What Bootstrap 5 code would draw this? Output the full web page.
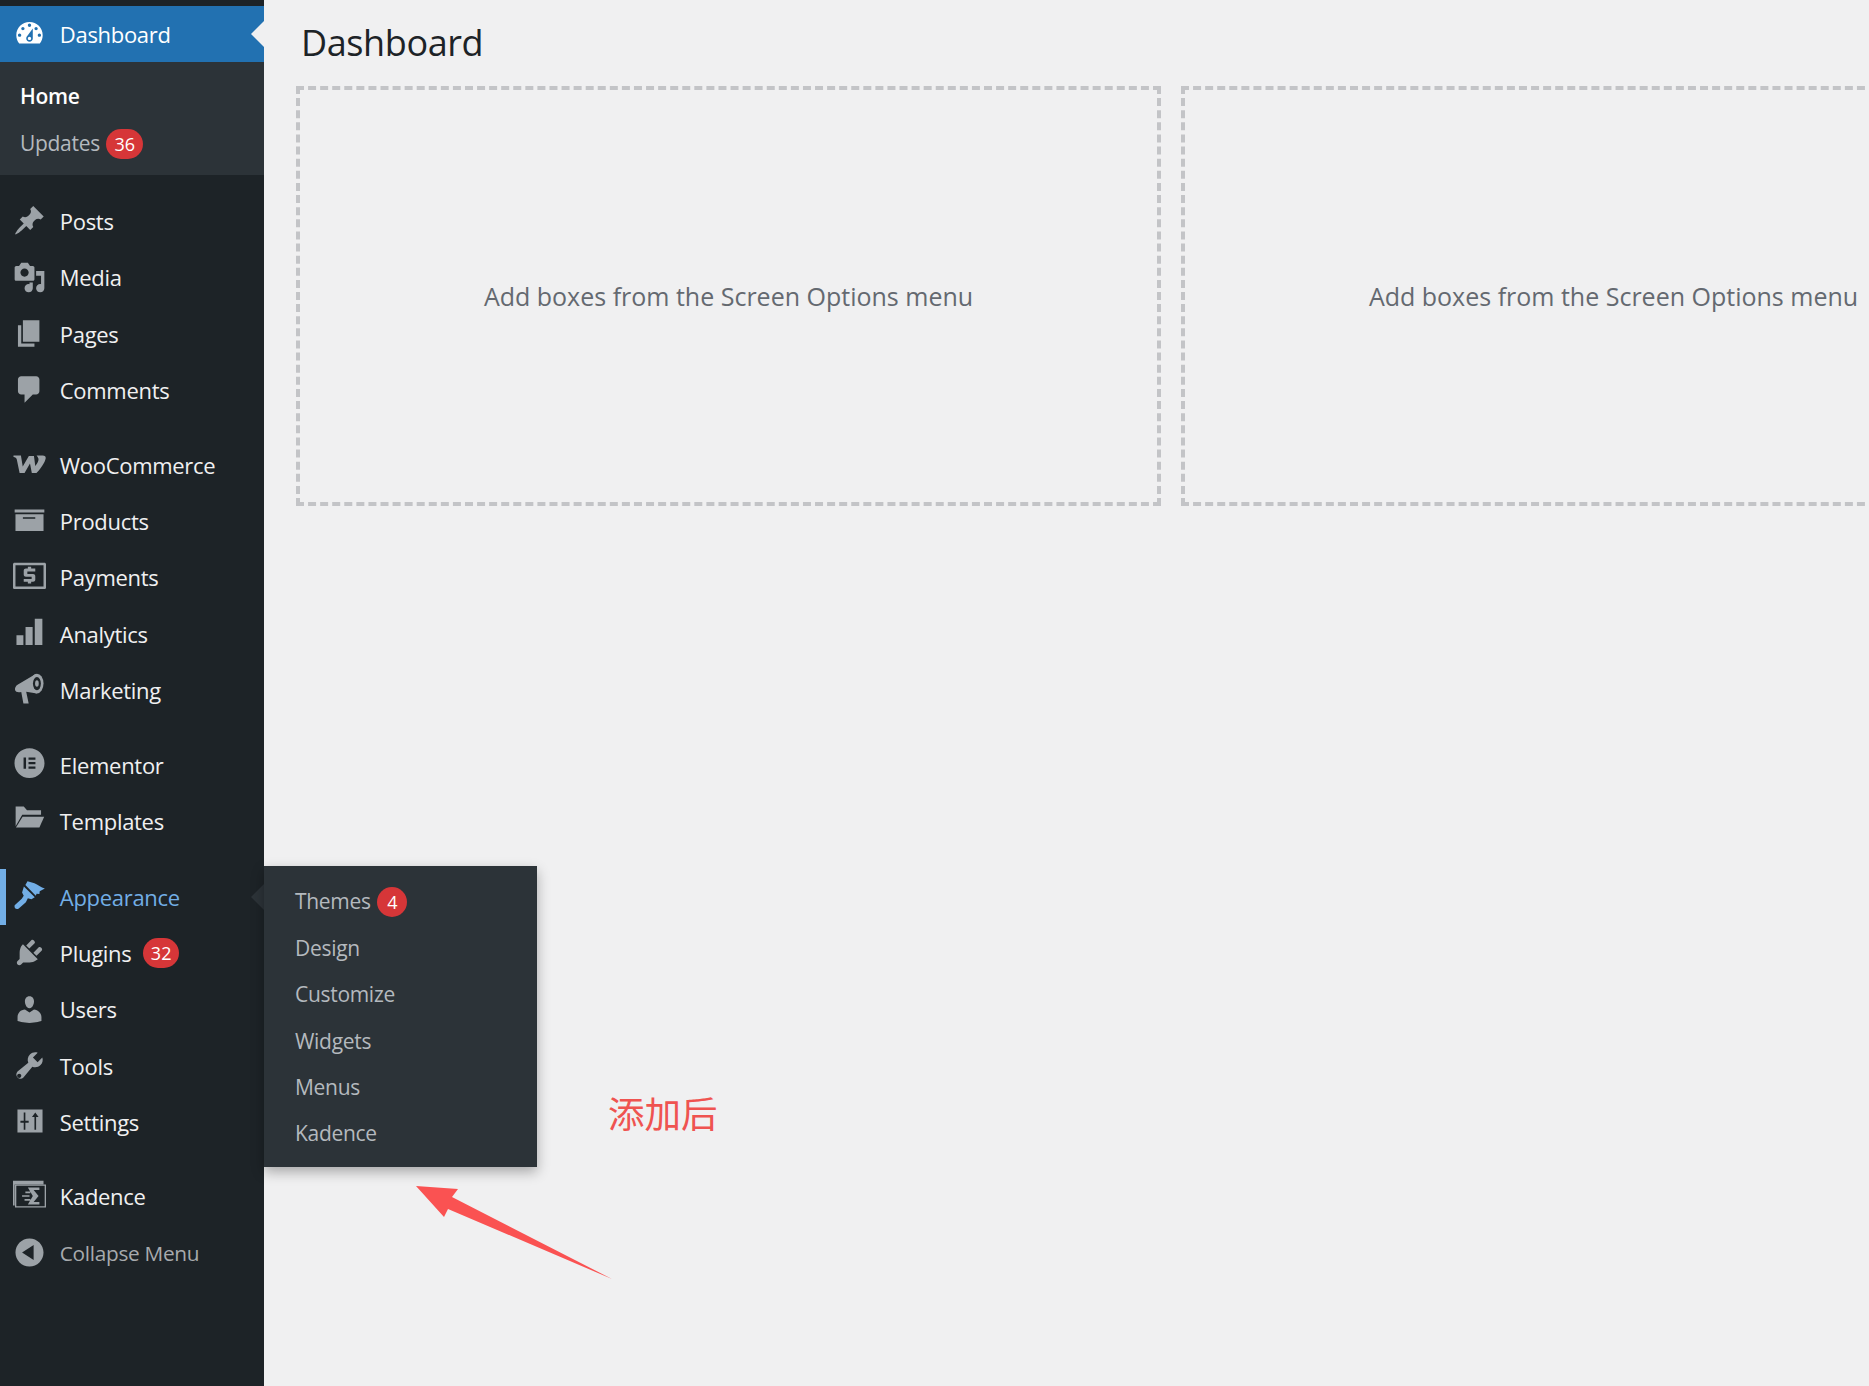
<!DOCTYPE html>
<html lang="en">
<head>
    <meta charset="UTF-8">
    <title>Dashboard</title>
    <link href="https://cdn.jsdelivr.net/npm/bootstrap@5.3.3/dist/css/bootstrap.min.css" rel="stylesheet">
    <style>
        html, body { height: 100%; }
        body { background: #f0f0f1; font-family: "Open Sans", "Liberation Sans", sans-serif; overflow: hidden; }
        .wp-side { width: 264px; background: #1d2327; padding-top: 6px; flex-shrink: 0; }
        .wp-item { height: 56.33px; color: #f0f0f1; font-size: 22px; text-decoration: none; letter-spacing: -.3px; }
        .wp-item svg { width: 33px; height: 33px; fill: #9ca2a7; margin: -1px 14px 0 12.8px; flex-shrink: 0; }
        .wp-item.is-current { background: #2271b1; color: #fff; height: 56px; }
        .wp-item.is-current svg { fill: #fff; }
        .wp-item.is-hover { color: #72aee6; box-shadow: inset 6px 0 0 #72aee6; }
        .wp-item.is-hover svg { fill: #72aee6; }
        .wp-item.is-muted { color: #a7aaad; font-size: 20.8px; }
        .wp-sep { height: 18.3px; }
        .wp-sep.is-wide { height: 19.4px; }
        .wp-sub { background: #2c3338; padding: 12px 0 9px; height: 113px; }
        .wp-sub a, .wp-fly a { display: flex; align-items: center; height: 46.4px; font-size: 21px; color: #b4b9be; text-decoration: none; letter-spacing: -.3px; }
        .wp-sub a { padding-left: 20px; }
        .wp-sub a.is-on { color: #fff; font-weight: 600; }
        .wp-fly { position: absolute; left: 264px; top: -3px; width: 273px; height: 301px; padding: 13px 0; background: #2c3338; box-shadow: 0 5px 12px rgba(0,0,0,.3); z-index: 5; }
        .wp-fly a { padding-left: 31px; }
        .wp-count { display: inline-block; min-width: 30px; height: 30px; line-height: 30px; padding: 0 8px; margin-left: 11.4px; border-radius: 15px; background: #d63638; color: #fff; font-size: 18px; text-align: center; letter-spacing: 0; }
        .wp-sub .wp-count, .wp-fly .wp-count { margin-left: 6.6px; }
        .wp-notch { position: absolute; right: 0; width: 0; height: 0; border: 13px solid transparent; border-left: 0; border-right-color: #f0f0f1; top: 15px; }
        .wp-notch.is-dark { border-right-color: #2c3338; }
        .wp-main { padding-left: 32px; }
        .wp-title { font-size: 36px; font-weight: 400; color: #1d2327; height: 86px; padding: 18px 0 0 5px; margin: 0; line-height: 50px; letter-spacing: -.4px; }
        .wp-drops { gap: 20px; }
        .wp-drop { width: 865px; height: 420px; flex-shrink: 0; padding-top: 2px; border: 4px dashed #c3c4c7; color: #646970; font-size: 25px; }
        .wp-note { position: absolute; left: 608px; top: 1088px; font-size: 36.5px; line-height: 50px; color: #ef5350; font-family: "Noto Sans CJK SC", sans-serif; }
        .wp-arrow { position: absolute; left: 408px; top: 1180px; }
    </style>
</head>
<body>
<div class="d-flex h-100">
    <nav class="wp-side">
        <a href="#" class="wp-item is-current d-flex align-items-center position-relative">
            <svg viewBox="0 0 20 20"><path d="M3.76 16h12.48c1.1-1.37 1.76-3.11 1.76-5 0-4.42-3.58-8-8-8s-8 3.58-8 8c0 1.89.66 3.63 1.76 5zM10 4c.55 0 1 .45 1 1s-.45 1-1 1-1-.45-1-1 .45-1 1-1zM6 6c.55 0 1 .45 1 1s-.45 1-1 1-1-.45-1-1 .45-1 1-1zm8 0c.55 0 1 .45 1 1s-.45 1-1 1-1-.45-1-1 .45-1 1-1zm-5.37 5.55L12 7v6c0 1.1-.9 2-2 2s-2-.9-2-2c0-.57.24-1.08.63-1.45zM4 10c.55 0 1 .45 1 1s-.45 1-1 1-1-.45-1-1 .45-1 1-1zm12 0c.55 0 1 .45 1 1s-.45 1-1 1-1-.45-1-1 .45-1 1-1zm-5 3c0-.55-.45-1-1-1s-1 .45-1 1 .45 1 1 1 1-.45 1-1z"/></svg>
            Dashboard
            <span class="wp-notch"></span>
        </a>
        <div class="wp-sub">
            <a href="#" class="is-on">Home</a>
            <a href="#">Updates <span class="wp-count">36</span></a>
        </div>
        <div class="wp-sep"></div>
        <a href="#" class="wp-item d-flex align-items-center"><svg viewBox="0 0 20 20"><path d="M10.44 3.02l1.82-1.82 6.36 6.35-1.83 1.82c-1.05-.68-2.48-.57-3.41.36l-.75.75c-.92.93-1.04 2.35-.35 3.41l-1.83 1.82-2.41-2.41-2.8 2.79c-.42.42-3.38 2.71-3.8 2.29s1.86-3.39 2.28-3.81l2.79-2.79L4.1 9.36l1.83-1.82c1.05.69 2.48.57 3.4-.36l.75-.75c.93-.92 1.05-2.35.36-3.41z"/></svg>Posts</a>
        <a href="#" class="wp-item d-flex align-items-center"><svg viewBox="0 0 20 20"><path d="M13 11V4c0-.55-.45-1-1-1h-1.67L9 1H5L3.67 3H2c-.55 0-1 .45-1 1v7c0 .55.45 1 1 1h10c.55 0 1-.45 1-1zM7 4.5c1.38 0 2.5 1.12 2.5 2.5S8.38 9.5 7 9.5 4.5 8.38 4.5 7 5.62 4.5 7 4.5zM14 6h5v10.5c0 1.38-1.12 2.5-2.5 2.5S14 17.88 14 16.5s1.12-2.5 2.5-2.5c.17 0 .34.02.5.05V9h-3V6zm-4 8.05V13h2v3.5c0 1.38-1.12 2.5-2.5 2.5S7 17.88 7 16.5 8.12 14 9.5 14c.17 0 .34.02.5.05z"/></svg>Media</a>
        <a href="#" class="wp-item d-flex align-items-center"><svg viewBox="0 0 20 20"><path d="M6 15V2h10v13H6zm-1 1h8v2H3V5h2v11z"/></svg>Pages</a>
        <a href="#" class="wp-item d-flex align-items-center"><svg viewBox="0 0 20 20"><path d="M5 2h9c1.1 0 2 .9 2 2v7c0 1.1-.9 2-2 2h-2l-5 5v-5H5c-1.1 0-2-.9-2-2V4c0-1.1.9-2 2-2z"/></svg>Comments</a>
        <div class="wp-sep"></div>
        <a href="#" class="wp-item d-flex align-items-center"><svg viewBox="0 0 20 20"><path d="M.3 4.600H4.800L5.900 11.200 9.600 4.800H12.700L13.500 10.900C14.800 9.300 15.800 7.600 15.400 6.400 15.200 5.700 14.800 5.200 14.300 4.600H18C19.200 4.600 20 5.200 19.800 6.300 19.400 8.700 16.600 12.700 14.200 15.200H11.400L10.300 9.400 7 15.200H4L2.300 7C2.100 6.100 1.400 5.700.3 5.500z"/></svg>WooCommerce</a>
        <a href="#" class="wp-item d-flex align-items-center"><svg viewBox="0 0 20 20"><path fill-rule="evenodd" d="M1 3.300h18v1.800H1zM1.500 6.200h17v10.200h-17zM6 8v.9h7.500V8z"/></svg>Products</a>
        <a href="#" class="wp-item d-flex align-items-center"><svg viewBox="0 0 20 20"><path fill-rule="evenodd" d="M1 1h18c.600 0 1 .400 1 1v14c0 .600-.400 1-1 1H1c-.600 0-1-.400-1-1V2c0-.600.400-1 1-1zm.500 1.500v13h17v-13z"/><path d="M9 3.500h2v1.100h2.500v1.700H8.700v1.600h3.500c.700 0 1.300.500 1.300 1.200v2.300c0 .700-.600 1.200-1.300 1.200H11v1h-2v-1H6.500v-1.700h4.800V9.500H7.800c-.700 0-1.300-.500-1.300-1.200V5.800c0-.700.600-1.200 1.300-1.200H9z"/></svg>Payments</a>
        <a href="#" class="wp-item d-flex align-items-center"><svg viewBox="0 0 20 20"><path d="M2.100 11h4.200v6H2.100zM7.600 6h4.300v11H7.600zM13.200 1h4.600v16h-4.600z"/></svg>Analytics</a>
        <a href="#" class="wp-item d-flex align-items-center"><svg viewBox="0 0 20 20"><path d="M14 .500L3 7C1.300 8 1 9.500 1.300 10.500 1.600 11.500 3 12 5 11.500L6.300 18.500H9.500L8 11.300 14.500 12.400z"/><ellipse cx="14.500" cy="6.400" rx="4" ry="6"/><ellipse cx="14.500" cy="6.400" rx="2.400" ry="4" fill="#1d2327"/><ellipse cx="14.500" cy="6.400" rx="1.100" ry="2"/></svg>Marketing</a>
        <div class="wp-sep"></div>
        <a href="#" class="wp-item d-flex align-items-center"><svg viewBox="0 0 20 20"><path fill-rule="evenodd" d="M10 .2c5 0 9.100 4 9.100 9s-4.100 9-9.100 9-9.100-4-9.100-9 4.100-9 9.100-9zM6.400 5.800v6.700h1.500V5.800zm3 0v1.300h4.200V5.800zm0 2.700v1.300h4.200V8.500zm0 2.700v1.300h4.200v-1.300z"/></svg>Elementor</a>
        <a href="#" class="wp-item d-flex align-items-center"><svg viewBox="0 0 20 20"><path d="M1.600 13.500V1.500H6.500L8.500 3.800H17V6.500H5.600z"/><path d="M1.800 14.300L5.800 7.700H18.900L16 14.300z"/></svg>Templates</a>
        <div class="wp-sep is-wide"></div>
        <div class="position-relative">
            <a href="#" class="wp-item is-hover d-flex align-items-center position-relative"><svg viewBox="0 0 20 20"><path d="M8.800.7L13 2C15 3 17 4.500 19.300 5.100L16.200 6.800 16 8.500 14.300 8.300 13.800 9.500 7.500 3z"/><path d="M6.600 3.900L13.200 10.400 11.200 11.600 9 11 7.800 13.500 3.500 17.300C2 18.300.5 17 1 15.300L5.300 11.300 6.500 9.500 5.500 7.500z"/></svg>Appearance<span class="wp-notch is-dark"></span></a>
            <div class="wp-fly">
                <a href="#">Themes <span class="wp-count">4</span></a>
                <a href="#">Design</a>
                <a href="#">Customize</a>
                <a href="#">Widgets</a>
                <a href="#">Menus</a>
                <a href="#">Kadence</a>
            </div>
        </div>
        <a href="#" class="wp-item d-flex align-items-center"><svg viewBox="0 0 20 20"><path d="M13.11 4.36L9.87 7.6 8 5.73l3.24-3.24c.35-.34 1.05-.2 1.56.32.52.51.66 1.21.31 1.55zm-8 1.77l.91-1.12 9.01 9.01-1.19.84c-.71.71-2.63 1.16-3.82 1.16H6.14L4.9 17.26c-.59.59-1.54.59-2.12 0-.59-.58-.59-1.53 0-2.12l1.24-1.24v-3.88c0-1.13.52-3.13 1.09-3.89zm7.26 3.97l3.24-3.24c.34-.35 1.04-.21 1.55.31.52.51.66 1.21.31 1.55l-3.24 3.25z"/></svg>Plugins <span class="wp-count">32</span></a>
        <a href="#" class="wp-item d-flex align-items-center"><svg viewBox="0 0 20 20"><path d="M10 9.25c-2.27 0-2.73-3.44-2.73-3.44C7 4.02 7.82 2 9.97 2c2.16 0 2.98 2.02 2.71 3.81 0 0-.41 3.44-2.68 3.44zm0 2.57L12.72 10c2.39 0 4.52 2.33 4.52 4.53v2.49s-3.65 1.13-7.24 1.13c-3.65 0-7.24-1.13-7.24-1.13v-2.49c0-2.25 1.94-4.48 4.47-4.48z"/></svg>Users</a>
        <a href="#" class="wp-item d-flex align-items-center"><svg viewBox="0 0 20 20"><path d="M16.68 9.77c-1.34 1.34-3.3 1.67-4.95.99l-5.41 6.52c-.99.99-2.59.99-3.57 0-.99-.98-.99-2.58 0-3.57l6.52-5.42c-.68-1.65-.35-3.61.99-4.95 1.28-1.28 3.12-1.62 4.72-1.06l-2.89 2.89 2.82 2.82 2.86-2.87c.53 1.58.18 3.39-1.09 4.65zM4.66 15.37c-.49-.49-1.29-.49-1.78 0s-.49 1.29 0 1.78 1.29.49 1.78 0 .49-1.29 0-1.78z"/></svg>Tools</a>
        <a href="#" class="wp-item d-flex align-items-center"><svg viewBox="0 0 20 20"><path fill-rule="evenodd" d="M2.700 2.700h15.200v14H2.700zM6.500 4.500v5H4.500v1.200h2v4.300h1v-4.300h2V9.500h-2v-5zM13.500 4.500L11.500 7.200h1.500V15h1V7.200h1.500z"/></svg>Settings</a>
        <div class="wp-sep"></div>
        <a href="#" class="wp-item d-flex align-items-center"><svg viewBox="0 0 20 20"><path d="M0 .500h18.500v2.200H1V15.500H0z"/><path fill-rule="evenodd" d="M1.200 2.700H20v14H1.200zm.8.800v12.400h17.200V3.500z"/><path d="M9 4.600H16V6H12.500L15.500 9.700 12.500 13.400H16V14.800H9L12 9.700zM7.500 7h3v1h-3zM5.500 9.200H10v1H5.500zM7 11.500h3.500v1H7z"/></svg>Kadence</a>
        <a href="#" class="wp-item is-muted d-flex align-items-center"><svg viewBox="0 0 20 20"><path fill-rule="evenodd" d="M10 1.500c4.700 0 8.500 3.800 8.500 8.500s-3.800 8.500-8.500 8.500-8.500-3.800-8.500-8.500 3.800-8.500 8.500-8.500zM12.500 5.500l-7 4.500 7 4.500z"/></svg>Collapse Menu</a>
    </nav>
    <main class="wp-main flex-grow-1 overflow-hidden">
        <h1 class="wp-title">Dashboard</h1>
        <div class="wp-drops d-flex">
            <div class="wp-drop d-flex align-items-center justify-content-center">Add boxes from the Screen Options menu</div>
            <div class="wp-drop d-flex align-items-center justify-content-center">Add boxes from the Screen Options menu</div>
        </div>
    </main>
</div>
<div class="wp-note">添加后</div>
<svg class="wp-arrow" width="210" height="105" viewBox="0 0 210 105"><path d="M8 6L50 9 44 17 204 99 40 29 36 37z" fill="#fa5252"/></svg>
<script src="https://cdn.jsdelivr.net/npm/bootstrap@5.3.3/dist/js/bootstrap.bundle.min.js"></script>
</body>
</html>
